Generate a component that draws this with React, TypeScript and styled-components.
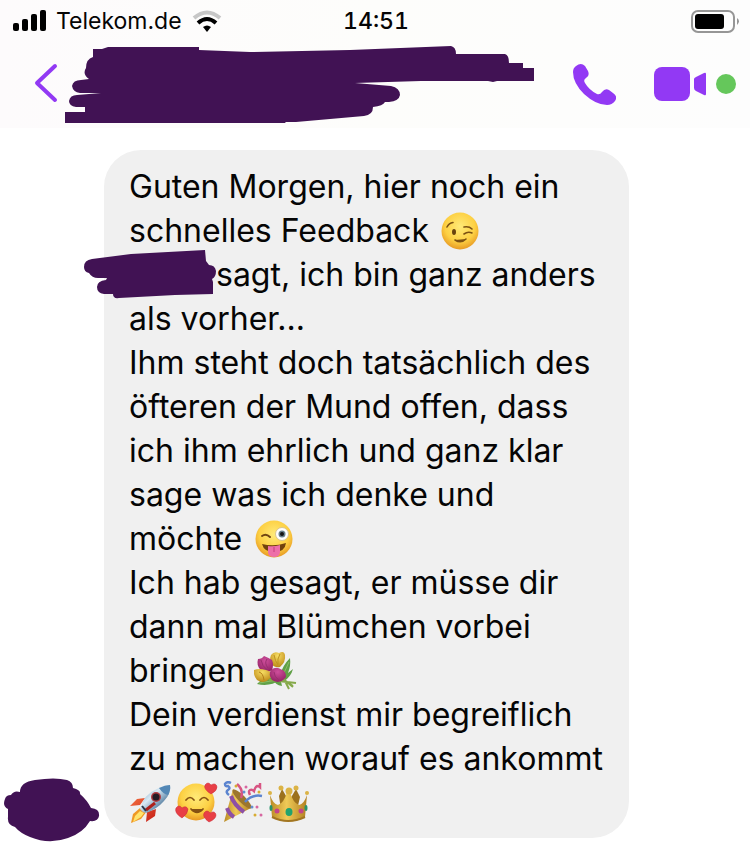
import React from "react";
import styled, { createGlobalStyle } from "styled-components";

const INK = "#411254";
const PURPLE = "#9239f4";

const GlobalStyle = createGlobalStyle`
  * { box-sizing: border-box; }
  body {
    margin: 0;
    background: #fff;
    color: #050505;
    font-family: Inter, "Liberation Sans", sans-serif;
  }
`;

const TopArea = styled.header`
  background: linear-gradient(90deg, #fdfbfc, #fdfdfb 50%, #fdfdfd);
  height: 128px;
`;

const StatusBar = styled.div`
  display: grid;
  grid-template-columns: 1fr auto 1fr;
  align-items: center;
  height: 40px;
  padding: 0 11px 0 13px;
  font-size: 23px;
  line-height: 42px;
`;

const Carrier = styled.div`
  display: flex;
  align-items: center;
  gap: 10px;
`;

const Clock = styled.time`
  font-weight: 500;
  font-variant-numeric: tabular-nums;
`;

const Battery = styled.svg`
  justify-self: end;
`;

const ChatBar = styled.nav`
  display: flex;
  align-items: center;
  height: 88px;
  padding: 0 14px 0 32px;
`;

const IconButton = styled.button`
  display: flex;
  padding: 0;
  border: 0;
  background: none;
  color: ${PURPLE};
  cursor: pointer;
`;

const ContactName = styled.svg`
  display: block;
  flex: none;
  margin: 0 auto 0 4px;
`;

const Actions = styled.div`
  display: flex;
  align-items: center;
  gap: 38px;
`;

const VideoGroup = styled.div`
  display: flex;
  align-items: center;
  gap: 9px;
`;

const OnlineDot = styled.span`
  width: 20px;
  height: 20px;
  border-radius: 50%;
  background: #65c75b;
`;

const MessageRow = styled.main`
  display: flex;
  align-items: flex-end;
  gap: 4px;
  padding: 22px 4px;
`;

const Avatar = styled.svg`
  flex: none;
  margin-bottom: -4px;
`;

const Bubble = styled.article`
  flex: 0 1 525px;
  padding: 15px 0 13px 25px;
  border-radius: 37px;
  background: #f0f0f0;
`;

const Message = styled.p`
  margin: 0;
  font-size: 32px;
  line-height: 44px;
`;

const Glyph = styled.svg`
  display: inline-block;
  width: 46px;
  height: 44px;
  vertical-align: top;
`;

const HiddenName = styled.svg`
  display: inline-block;
  width: 132px;
  height: 44px;
  margin-left: -45px;
  overflow: visible;
  vertical-align: top;
`;

const Gradients = styled.svg`
  position: absolute;
  width: 0;
  height: 0;
`;

function SharedGradients() {
  return (
    <Gradients aria-hidden="true">
      <defs>
        <radialGradient id="face" cx="50%" cy="38%" r="62%">
          <stop offset="0" stopColor="#ffea78" />
          <stop offset=".65" stopColor="#fdd043" />
          <stop offset="1" stopColor="#e79a24" />
        </radialGradient>
        <linearGradient id="gold" x1="0" x2="1">
          <stop offset="0" stopColor="#b98a25" />
          <stop offset=".45" stopColor="#efca57" />
          <stop offset="1" stopColor="#b17f20" />
        </linearGradient>
        <linearGradient id="hull" x1="0" y1="0" x2="1" y2="1">
          <stop offset="0" stopColor="#5b8fb9" />
          <stop offset=".4" stopColor="#d9eaf4" />
          <stop offset=".7" stopColor="#6187a8" />
          <stop offset="1" stopColor="#29425c" />
        </linearGradient>
        <linearGradient id="fin" x1="0" y1="0" x2="1" y2="1">
          <stop offset="0" stopColor="#f36b3d" />
          <stop offset="1" stopColor="#c52018" />
        </linearGradient>
        <radialGradient id="magenta" cx="50%" cy="30%" r="80%">
          <stop offset="0" stopColor="#cf4f9c" />
          <stop offset="1" stopColor="#8b1c5e" />
        </radialGradient>
        <radialGradient id="yellowPetal" cx="50%" cy="25%" r="80%">
          <stop offset="0" stopColor="#f6dc62" />
          <stop offset="1" stopColor="#b98312" />
        </radialGradient>
      </defs>
    </Gradients>
  );
}

function Wink() {
  return (
    <Glyph viewBox="0 0 46 44" role="img" aria-label="😉">
      <circle cx="22" cy="22" r="18.5" fill="url(#face)" />
      <ellipse cx="16" cy="23" rx="2" ry="3" fill="#69430e" />
      <g fill="none" stroke="#7c5112" strokeLinecap="round" strokeWidth="1.6">
        <path d="M9 18q2-4 6-4.500" />
        <path d="M26 18q5-1 8 2" />
        <path d="M26 25q4-3 8-1" />
        <path d="M17 31q6 4 11-1" fill="#7c5112" />
      </g>
    </Glyph>
  );
}

function Tongue() {
  return (
    <Glyph viewBox="0 0 46 44" role="img" aria-label="😜">
      <circle cx="23" cy="22" r="18.5" fill="url(#face)" />
      <path d="M11 19q4-3 8 1" fill="none" stroke="#704512" strokeWidth="2" strokeLinecap="round" />
      <circle cx="31" cy="17" r="6.500" fill="#fff" stroke="#d9c48c" />
      <circle cx="31" cy="17" r="3.500" fill="#69818c" />
      <circle cx="31" cy="17" r="2" fill="#151515" />
      <path d="M11 27q12 3 24-1q-1 9-12 9q-10 0-12-8" fill="#71420d" />
      <path d="M17 29q6 1 12-1v7q0 5-6 5q-6 0-6-5z" fill="#ed6fa8" />
      <path d="M23 30v5" stroke="#c43e7d" fill="none" />
    </Glyph>
  );
}

function Tulips() {
  return (
    <Glyph viewBox="0 0 46 44" role="img" aria-label="💐">
      <path d="M3 35q10-11 23-4-10 7-23 4M26 26q3-10 10-17 1 8-2 15l5-4q-2 8-10 13M19 30q8-2 9 7-7-1-9-7" fill="#60a047" />
      <path d="m5 34 18-3m6-5 6-13" stroke="#8bbd65" fill="none" />
      <g fill="none" stroke="#86a94a" strokeWidth="2">
        <path d="m20 24 19 13M25 20l10 20M15 31l27 3M28 29l11 9" />
      </g>
      <path d="M18 16q-3-5-1-10 3-4 8-2 5-3 6 2 1 7-5 12-4 1-8-2" fill="url(#yellowPetal)" />
      <path d="M7 21Q2 17 4 10q4 0 6-3 5 2 8 4 2 5 0 10-5 4-11 0" fill="url(#magenta)" />
      <path d="M3 31Q-1 26 0 21q5-2 12 0 6 1 5 7-6 8-14 3" fill="url(#yellowPetal)" />
      <path d="M18 31q-4-6-1-10 5-4 9-1 6 1 6 8-6 8-14 3" fill="url(#magenta)" />
      <g fill="none" strokeWidth="1">
        <path d="M20 6q1 6 4 10m2-11q-3 5-2 10" stroke="#bd931f" />
        <path d="M7 11q1 6 6 10m0-11q-3 4 1 9m6 4q0 5 5 8" stroke="#98306f" />
        <path d="M5 23q4 1 5 8" stroke="#b37e19" />
      </g>
    </Glyph>
  );
}

function Rocket() {
  return (
    <Glyph viewBox="0 0 46 44" role="img" aria-label="🚀">
      <path d="m16 17-8 1-7 7 10-1zm11 11-1 7-9 6 1-10z" fill="url(#fin)" />
      <path d="m11 27-7 6-2 9 10-4 6-8z" fill="#ef9925" />
      <path d="m11 30-5 5-2 6 8-5 3-4z" fill="#ffe46c" />
      <path d="M11 28q4-15 17-20 7-4 13-4 1 9-6 16-7 8-18 12-4-1-6-4" fill="url(#hull)" />
      <path d="M30 7q6-3 11-3 1 5-2 10-5-1-9-7" fill="#5387b5" />
      <path d="m17 29 9-7" stroke="#ae211b" strokeWidth="3" />
      <circle cx="27" cy="16" r="5" fill="#ad3941" />
      <circle cx="27" cy="16" r="3.500" fill="#241b25" />
      <path d="m13 25 4 5" stroke="#293646" strokeWidth="2" />
    </Glyph>
  );
}

function Hearts() {
  return (
    <Glyph viewBox="0 0 46 44" role="img" aria-label="🥰">
      <circle cx="21" cy="21" r="18.500" fill="url(#face)" />
      <g fill="none" stroke="#855213" strokeWidth="1.700" strokeLinecap="round">
        <path d="M11 19q4-5 8 0M25 19q4-5 8 0" />
        <path d="M16 28q6 7 12 0" fill="#855213" />
      </g>
      <g fill="#e83f46" stroke="#c92b36" strokeWidth=".5">
        <path d="M36 13q-8-5-6-9 3-4 6 0 5-3 6 2 0 4-6 7" />
        <path d="M7 37q-8-5-6-10 3-4 6 0 4-3 6 1 0 5-6 9" />
        <path d="M34 41q-7-5-5-9 3-4 6 0 5-3 6 2 0 4-7 7" />
      </g>
    </Glyph>
  );
}

function Party() {
  return (
    <Glyph viewBox="0 0 46 44" role="img" aria-label="🎉">
      <path d="M12 8q13 5 18 19L3 41z" fill="url(#gold)" />
      <path d="M10 15q3 9 13 16M6 27q2 6 7 9" stroke="#8d50a6" strokeWidth="4" fill="none" />
      <ellipse cx="21" cy="18" rx="3.500" ry="13" transform="rotate(-45 21 18)" fill="#9c762e" />
      <g fill="none" strokeWidth="2.500">
        <path d="M10 2q-4-2-6 1 0 3 3 2 3 2 0 4-3 2 1 5M24 21q7-8 17-6" stroke="#5b84cf" />
        <path d="M20 17q3-8-4-14m13 11q-2-4 0-5 2-1 4 1 1-4 3-5 2 0 3 1V2" stroke="#d85583" />
      </g>
      <g fill="#d767a1"><circle cx="25" cy="6" r="1.500" /><circle cx="36" cy="26" r="1.500" /><circle cx="40" cy="34" r="1.500" /></g>
      <g fill="#d8ac32"><circle cx="15" cy="5" r="1.500" /><circle cx="38" cy="11" r="1.500" /><circle cx="34" cy="34" r="1.500" /></g>
      <g fill="#638fd0"><circle cx="23" cy="11" r="1.500" /><circle cx="31" cy="26" r="1.500" /></g>
    </Glyph>
  );
}

function Crown() {
  return (
    <Glyph viewBox="0 0 46 44" role="img" aria-label="👑">
      <path d="m12 15 3-7 7 12 7-12 4 8-3 13H14z" fill="#9c711d" />
      <path d="M3 14q3 9 8 10 6-2 9-13h3q3 11 9 13 5-1 8-10l-2 22q-16 9-33 0z" fill="url(#gold)" />
      <g fill="#dbb345"><circle cx="3" cy="12" r="2" /><circle cx="14" cy="7" r="2.500" /><circle cx="22" cy="10" r="3.500" /><circle cx="29" cy="7" r="2.500" /><circle cx="40" cy="12" r="2" /></g>
      <path d="M5 36q16 8 33 0" stroke="#a27622" strokeWidth="2" fill="none" />
      <ellipse cx="22" cy="31" rx="3.500" ry="4" fill="#21a36e" />
      <circle cx="10" cy="30" r="2.500" fill="#c34488" />
      <circle cx="34" cy="30" r="2.500" fill="#c34488" />
      <ellipse cx="4" cy="27" rx="1.500" ry="3" fill="#29936a" />
      <ellipse cx="39" cy="27" rx="1.500" ry="3" fill="#29936a" />
    </Glyph>
  );
}

function SignalIcon() {
  return (
    <svg width="33" height="22" viewBox="0 0 33 22" role="img" aria-label="Signal">
      <rect y="13" width="6" height="8" rx="2" />
      <rect x="9" y="9" width="6" height="12" rx="2" />
      <rect x="18" y="4" width="6" height="17" rx="2" />
      <rect x="27" width="6" height="21" rx="2" />
    </svg>
  );
}

function WifiIcon() {
  return (
    <svg width="30" height="22" viewBox="0 0 30 22" fill="none" strokeWidth="4" role="img" aria-label="WLAN">
      <path d="M2 8q13-11 26 0" stroke="#c7c7c7" />
      <path d="M6 13q9-8 18 0" stroke="#000" />
      <path d="M11 17q4-3 8 0l-4 5z" fill="#000" />
    </svg>
  );
}

export default function App() {
  return (
    <>
      <GlobalStyle />
      <SharedGradients />
      <TopArea>
        <StatusBar>
          <Carrier>
            <SignalIcon />
            <span>Telekom.de</span>
            <WifiIcon />
          </Carrier>
          <Clock>14:51</Clock>
          <Battery width="48" height="23" viewBox="0 0 48 23" role="img" aria-label="Akku">
            <rect x="1" y="1" width="42" height="21" rx="6" fill="none" stroke="#969696" strokeWidth="2" />
            <rect x="4" y="4" width="29" height="15" rx="3" />
            <path d="M46 8q4 3 0 7z" fill="#969696" />
          </Battery>
        </StatusBar>
        <ChatBar>
          <IconButton aria-label="Zurück">
            <svg width="29" height="42" viewBox="0 0 29 42" fill="none" stroke="currentColor" strokeWidth="4" strokeLinecap="round" strokeLinejoin="round">
              <path d="M23 3 5 20l18 17" />
            </svg>
          </IconButton>
          <ContactName width="470" height="78" viewBox="65 45 470 78" role="img" aria-label="Kontakt">
            <path fill={INK} d="M93 49h9l6-2h91v3l51 2 100-2 101-4q5 1 5 8h49q4 1 4 9h14v5h11v13h-37l-4 1-5-1H421l-66 2 36 3q9 2 9 9-1 6-11 7h-4q-2 4-12 5 0 8-9 9l-68 6h-10q-3 3-8 2H65v-12h20v-5H76q-7-1-7-6 1-6 8-6l24-2H80q-7-1-8-7 1-6 9-6l8-1q-7-5-3-11 0-9 7-11z" />
          </ContactName>
          <Actions>
            <IconButton aria-label="Anrufen">
              <svg width="43" height="43" viewBox="0 0 43 43" fill="currentColor">
                <path d="M3 3q5-4 9 0l3 5q2 5-2 7-3 2-1 5 4 7 12 11 3 1 5-2 3-4 7-2l4 3q5 3 2 8-3 4-8 4-11 0-23-11Q0 20 0 9q0-4 3-6" />
              </svg>
            </IconButton>
            <VideoGroup>
              <IconButton aria-label="Videoanruf">
                <svg width="53" height="34" viewBox="0 0 53 34" fill="currentColor">
                  <rect width="36" height="34" rx="8" />
                  <path d="M40 12q0-1 2-2l8-4q2-1 2 1v20q0 2-2 1l-8-4q-2-1-2-3z" />
                </svg>
              </IconButton>
              <OnlineDot role="img" aria-label="Online" />
            </VideoGroup>
          </Actions>
        </ChatBar>
      </TopArea>
      <MessageRow>
        <Avatar width="96" height="64" viewBox="4 778 96 64" role="img" aria-label="Profilbild">
          <path fill={INK} d="M20 792q0-10 15-12 20-3 32 0 6 2 6 8 8 2 7 6 7 6 11 14 9 1 8 8-1 6-9 5-7 12-22 17-19 7-38-1-10-4-15-10-8-2-7-10V809q-6-3-3-10 1-4 6-4 3-5 9-3z" />
        </Avatar>
        <Bubble>
          <Message>
            Guten Morgen, hier noch ein<br />
            schnelles Feedback <Wink /><br />
            <HiddenName viewBox="84 252 132 44" role="img" aria-label="Name">
              <path fill={INK} d="m92 258 39-5 74-4 1 11 3 4q6 0 7 6 0 6-4 8l1 3v12l-38 1-56 3q-6 1-6-4h-9q-7-1-7-7 0-6 9-7l1-2h-9q-6 0-9-5-5-1-5-6 0-7 8-8" />
            </HiddenName>sagt, ich bin ganz anders<br />
            als vorher...<br />
            Ihm steht doch tatsächlich des<br />
            öfteren der Mund offen, dass<br />
            ich ihm ehrlich und ganz klar<br />
            sage was ich denke und<br />
            möchte <Tongue /><br />
            Ich hab gesagt, er müsse dir<br />
            dann mal Blümchen vorbei<br />
            bringen <Tulips /><br />
            Dein verdienst mir begreiflich<br />
            zu machen worauf es ankommt<br />
            <Rocket /><Hearts /><Party /><Crown />
          </Message>
        </Bubble>
      </MessageRow>
    </>
  );
}
